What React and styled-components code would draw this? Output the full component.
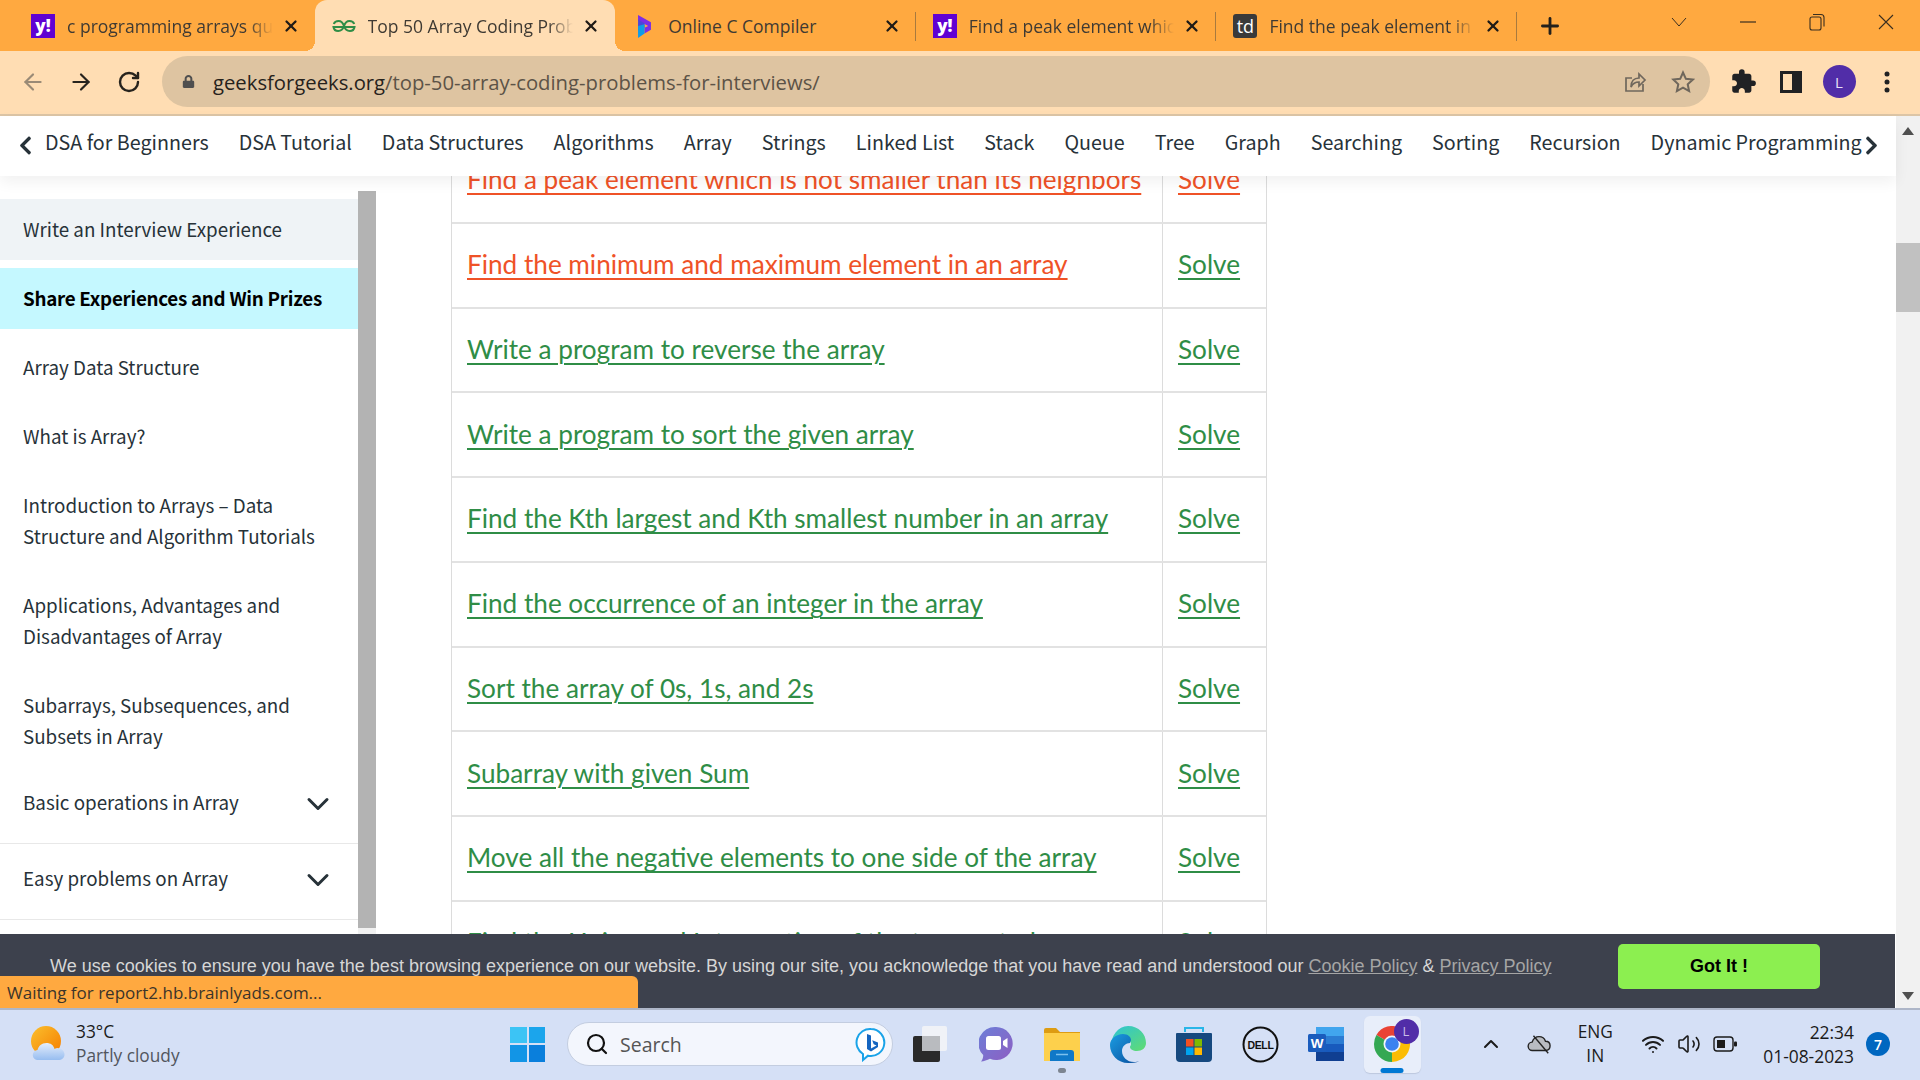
import React from 'react';
import styled, { createGlobalStyle } from 'styled-components';
import { ArrowLeft, ArrowRight, RotateCw, Plus, X, ChevronDown, ChevronUp, Search as SearchGlyph, Wifi, Volume2 } from 'lucide-react';
import { FaChevronLeft, FaChevronRight, FaLock } from 'react-icons/fa';
import { MdExtension } from 'react-icons/md';

const ui = '"Open Sans", "Noto Sans", sans-serif';
const site = '"Noto Sans CJK SC", "Noto Sans", sans-serif';

const GlobalStyle = createGlobalStyle`
  html, body { margin: 0; padding: 0; background: #fff; overflow: hidden; }
  * { box-sizing: border-box; }
`;

const Screen = styled.div`
  width: 1920px;
  height: 1080px;
  display: flex;
  flex-direction: column;
  overflow: hidden;
  font-family: ${ui};
`;

/* ---------- tab strip ---------- */
const TabStrip = styled.div`
  height: 51px;
  flex: none;
  display: flex;
  padding-left: 14px;
  background: #ffa940;
`;

const Tab = styled.div`
  position: relative;
  width: 300.6px;
  height: 51px;
  display: flex;
  align-items: center;
  padding: 0 15px 0 17px;
  border-radius: 12px 12px 0 0;
  background: ${p => (p.$active ? '#ffddb3' : 'transparent')};

  &::before {
    content: ${p => (p.$active ? '""' : 'none')};
    position: absolute;
    left: -10px;
    bottom: 0;
    width: 10px;
    height: 10px;
    background: radial-gradient(circle at 0 0, transparent 10px, #ffddb3 10px);
  }

  &::after {
    content: '';
    position: absolute;
    right: ${p => (p.$active ? '-10px' : '0')};
    bottom: ${p => (p.$active ? '0' : '10px')};
    top: ${p => (p.$active ? 'auto' : '12px')};
    width: ${p => (p.$active ? '10px' : p.$sep ? '1px' : '0')};
    height: ${p => (p.$active ? '10px' : 'auto')};
    background: ${p => (p.$active ? 'radial-gradient(circle at 100% 0, transparent 10px, #ffddb3 10px)' : '#a87a3e')};
  }
`;

const Favicon = styled.span`
  width: 24px;
  height: 24px;
  flex: none;
  display: flex;
  align-items: center;
  justify-content: center;
  border-radius: ${p => p.$radius || 0}px;
  background: ${p => p.$bg || 'transparent'};
  color: #fff;
  font-size: ${p => p.$size || 16}px;
  font-weight: ${p => p.$weight || 400};
`;

const TabTitle = styled.span`
  flex: 1;
  min-width: 0;
  margin: 0 9px 0 12px;
  overflow: hidden;
  white-space: nowrap;
  font-size: 17.5px;
  color: #3f3a33;
  -webkit-mask-image: ${p => (p.$fade ? 'linear-gradient(to right, #000 88%, transparent)' : 'none')};
  mask-image: ${p => (p.$fade ? 'linear-gradient(to right, #000 88%, transparent)' : 'none')};
`;

const NewTab = styled.span`
  margin-left: 20px;
  display: flex;
  align-items: center;
  color: #24211c;
`;

const WindowControls = styled.div`
  margin-left: auto;
  display: flex;
  height: 44px;
`;

const WindowButton = styled.span`
  width: 69px;
  display: flex;
  align-items: center;
  justify-content: center;
  color: #3a2f20;
`;

/* ---------- address toolbar ---------- */
const Toolbar = styled.div`
  height: 65px;
  flex: none;
  display: flex;
  align-items: center;
  padding: 0 0 2px 9px;
  background: #ffddb3;
  border-bottom: 2px solid #dcc5a6;
`;

const NavButton = styled.span`
  width: 48px;
  display: flex;
  justify-content: center;
  color: ${p => (p.$dim ? '#9a8a76' : '#27231d')};
`;

const AddressBar = styled.div`
  margin-left: 9px;
  width: 1548px;
  height: 51px;
  display: flex;
  align-items: center;
  padding: 0 15px 0 20px;
  border-radius: 26px;
  background: #dec4a1;
`;

const Url = styled.span`
  margin-left: 18px;
  font-size: 20.25px;
  color: #5c5347;
`;

const Host = styled.span`
  color: #26221c;
`;

const AddressActions = styled.div`
  margin-left: auto;
  display: flex;
  align-items: center;
  gap: 24px;
  color: #6f675c;
`;

const ToolIcon = styled.span`
  width: 48px;
  display: flex;
  justify-content: center;
  color: #202124;
`;

const Avatar = styled.span`
  width: 33px;
  height: 33px;
  border-radius: 50%;
  display: flex;
  align-items: center;
  justify-content: center;
  background: #512da8;
  color: #e8e0f6;
  font-size: 15px;
`;

const Tools = styled.div`
  display: flex;
  align-items: center;
  margin-left: 9px;
`;

/* ---------- page ---------- */
const Page = styled.div`
  position: relative;
  flex: 1;
  min-height: 0;
  display: flex;
  background: #fff;
`;

const PageColumn = styled.div`
  flex: 1;
  min-width: 0;
  display: flex;
  flex-direction: column;
`;

const Scrollbar = styled.div`
  width: 24px;
  flex: none;
  display: flex;
  flex-direction: column;
  align-items: center;
  padding: 11px 0 8px;
  background: #f1f1f1;
`;

const ScrollArrow = styled.span`
  width: 0;
  height: 0;
  border-left: 6px solid transparent;
  border-right: 6px solid transparent;
  border-${p => (p.$down ? 'top' : 'bottom')}: 8px solid #505050;
  margin-top: ${p => (p.$down ? 'auto' : '0')};
`;

const ScrollThumb = styled.span`
  width: 100%;
  height: 69px;
  margin-top: 108px;
  background: #c1c1c1;
`;

const TopicNav = styled.nav`
  position: relative;
  z-index: 2;
  height: 60px;
  flex: none;
  display: flex;
  align-items: center;
  gap: 30px;
  padding: 0 34px 9px 45px;
  background: #fff;
  box-shadow: 0 6px 14px rgba(0, 0, 0, 0.06);
  font-family: ${site};
  font-size: 19.7px;
  color: #273239;
  white-space: nowrap;
  overflow: hidden;
`;

const NavArrow = styled.span`
  position: absolute;
  top: 19px;
  ${p => (p.$right ? 'right: 14px;' : 'left: 15px;')}
  display: flex;
  color: #273239;
  font-size: 21px;
  z-index: 1;
`;

const Body = styled.div`
  flex: 1;
  min-height: 0;
  display: flex;
  overflow: hidden;
`;

const Sidebar = styled.aside`
  width: 377px;
  flex: none;
  display: flex;
  padding-top: 15px;
  font-family: ${site};
  font-size: 18.8px;
  color: #273239;
`;

const SideList = styled.div`
  width: 358px;
  flex: none;
  display: flex;
  flex-direction: column;
  gap: 8px;
  padding-top: 8px;
`;

const SideItem = styled.div`
  padding: 14px 23px 16px;
  line-height: 31px;
  color: ${p => (p.$strong ? '#000' : '#273239')};
  font-weight: ${p => (p.$strong ? 600 : 400)};
  letter-spacing: ${p => (p.$strong ? '-0.27px' : '0')};
  background: ${p => p.$bg || 'transparent'};
`;

const SideGroup = styled.div`
  height: 76.5px;
  flex: none;
  margin-top: -8px;
  display: flex;
  align-items: center;
  justify-content: space-between;
  padding: 0 22px 7px 23px;
  border-bottom: 1px solid #e8e8e8;
  color: #273239;

  svg {
    margin-top: 5px;
  }
`;

const SideRail = styled.div`
  width: 18px;
  flex: none;
  height: 743px;
  background: linear-gradient(to bottom, #b3b3b3 737px, #f1f1f1 737px);
`;

const Main = styled.main`
  flex: 1;
  min-width: 0;
  padding-left: 74px;
`;

const ProblemTable = styled.div`
  width: 816px;
  margin-top: -37px;
  border-left: 1px solid #dcdcdc;
  border-right: 1px solid #dcdcdc;
  font-family: Lato, "Open Sans", sans-serif;
  font-size: 26.15px;
`;

const ProblemRow = styled.div`
  height: 84.75px;
  display: grid;
  grid-template-columns: 711px 1fr;
  align-items: stretch;
  border-bottom: 2px solid #e2e2e2;
`;

const ProblemCell = styled.div`
  display: flex;
  align-items: center;
  padding: 0 0 2px 15px;
  border-right: ${p => (p.$first ? '1px solid #dcdcdc' : 'none')};
`;

const ProblemLink = styled.a`
  color: ${p => (p.$visited ? '#ef5227' : '#2f8d46')};
  text-decoration: underline;
  text-decoration-thickness: 2px;
  text-underline-offset: 4px;
  white-space: nowrap;
`;

const CookieBar = styled.div`
  position: absolute;
  left: 0;
  bottom: 0;
  z-index: 3;
  width: 1895px;
  height: 74px;
  display: flex;
  align-items: flex-start;
  padding: 10px 0 0 50px;
  background: #3d414d;
  font-family: "Liberation Sans", Arial, sans-serif;
  font-size: 18px;
  color: #d6d6d6;
`;

const CookieText = styled.p`
  margin: 0;
  width: 1568px;
  line-height: 45px;
  white-space: nowrap;
`;

const CookieLink = styled.a`
  color: #a5a5a5;
  text-decoration: underline;
`;

const GotIt = styled.button`
  width: 202px;
  height: 45px;
  border: none;
  border-radius: 5px;
  background: #8cef50;
  color: #000;
  font-family: "Liberation Sans", Arial, sans-serif;
  font-size: 18px;
  font-weight: 700;
`;

const StatusPill = styled.div`
  position: absolute;
  left: 0;
  bottom: 0;
  z-index: 4;
  width: 638px;
  height: 32px;
  display: flex;
  align-items: center;
  padding-left: 7px;
  border-radius: 0 6px 0 0;
  background: #ffa940;
  font-size: 17px;
  color: #3b342a;
`;

/* ---------- taskbar ---------- */
const Taskbar = styled.footer`
  height: 72px;
  flex: none;
  display: flex;
  align-items: center;
  padding-bottom: 2px;
  background: #d5e0f6;
  border-top: 2px solid #aeb6c8;
`;

const Weather = styled.div`
  width: 510px;
  flex: none;
  display: flex;
  align-items: center;
  gap: 10px;
  padding-left: 30px;
`;

const WeatherText = styled.div`
  display: flex;
  flex-direction: column;
  font-size: 17.3px;
  line-height: 24px;
  color: #1c1c1c;
`;

const WeatherNote = styled.span`
  color: #52565e;
`;

const StartButton = styled.span`
  width: 35px;
  height: 35px;
  flex: none;
  display: grid;
  grid-template-columns: 1fr 1fr;
  gap: 2px;
`;

const StartPane = styled.span`
  background: ${p => p.$bg};
`;

const SearchBox = styled.div`
  width: 326px;
  height: 44px;
  flex: none;
  margin: 0 4px 0 22px;
  display: flex;
  align-items: center;
  padding: 0 5px 0 17px;
  border-radius: 22px;
  background: #f3f6fd;
  border: 1px solid #c3cde0;
  color: #111;
`;

const SearchLabel = styled.span`
  margin-left: 11px;
  font-size: 19.5px;
  color: #555;
`;

const BingMark = styled.span`
  margin-left: auto;
  display: flex;
`;

const TaskSlot = styled.span`
  position: relative;
  width: ${p => (p.$active ? '57px' : '66px')};
  height: 57px;
  margin: ${p => (p.$active ? '0 4.5px' : '0')};
  flex: none;
  display: flex;
  align-items: center;
  justify-content: center;
  border-radius: 6px;
  background: ${p => (p.$active ? '#e8eefa' : 'transparent')};
  box-shadow: ${p => (p.$active ? '0 1px 1px #bdc8de' : 'none')};
`;

const RunDot = styled.span`
  position: absolute;
  left: 50%;
  bottom: 0;
  transform: translateX(-50%);
  height: 5px;
  width: ${p => (p.$active ? '23px' : '8px')};
  border-radius: 3px;
  background: ${p => (p.$active ? '#0078d4' : '#7d8591')};
`;

const AppBadge = styled.span`
  position: absolute;
  top: 3px;
  right: 2px;
  width: 25px;
  height: 25px;
  display: flex;
  align-items: center;
  justify-content: center;
  border-radius: 50%;
  background: #512da8;
  color: #c9bde8;
  font-size: 13px;
`;

const Tray = styled.div`
  margin-left: auto;
  display: flex;
  align-items: center;
  padding-right: 30px;
  color: #1b1b1b;
`;

const TrayIcon = styled.span`
  width: ${p => p.$w || 24}px;
  margin-left: ${p => p.$gap || 0}px;
  display: flex;
  justify-content: center;
`;

const Lang = styled.div`
  width: 36px;
  margin-left: ${p => p.$gap}px;
  text-align: center;
  font-size: 17.3px;
  line-height: 24px;
`;

const Clock = styled.div`
  margin-left: 26px;
  text-align: right;
  font-size: 17.4px;
  line-height: 24px;
`;

const NotifyBadge = styled.span`
  width: 24px;
  height: 24px;
  margin-left: 12px;
  display: flex;
  align-items: center;
  justify-content: center;
  border-radius: 50%;
  background: #0067c0;
  color: #fff;
  font-size: 14px;
  font-weight: 600;
`;

/* ---------- drawn icons ---------- */
const GfgIcon = () => (
  <svg width="24" height="14" viewBox="0 0 24 14" fill="none" stroke="#2f8d46" strokeWidth="2">
    <path d="M12 8h10.5c-.4 2.6-2.2 4-4.7 4-2.8 0-4.8-2-5.8-5-1-3-2.8-5-5.4-5C4.300 2 2.500 3 1.800 5" />
    <path d="M12 8H1.500c.4 2.600 2.200 4 4.700 4 2.800 0 4.800-2 5.800-5 1-3 2.800-5 5.400-5 2.300 0 4.100 1 4.800 3" />
  </svg>
);

const PerplexityIcon = () => (
  <svg width="15" height="24" viewBox="0 0 16 26">
    <path d="M1 1l14 8v8l-7 4v-6l4-2-11-6z" fill="#7c2ee6" />
    <path d="M1 6l7 4v5l-7 3z" fill="#4c46d8" />
    <path d="M1 13l7-2v10l-7 5z" fill="#0f9be8" />
  </svg>
);

const ThinChevron = () => (
  <svg width="16" height="10" viewBox="0 0 16 10" fill="none" stroke="currentColor" strokeWidth="1">
    <path d="M1 1l7 8 7-8" />
  </svg>
);

const MinimizeIcon = () => (
  <svg width="16" height="2" viewBox="0 0 16 2"><path d="M0 1h16" stroke="currentColor" strokeWidth="1.200" /></svg>
);

const RestoreIcon = () => (
  <svg width="16" height="18" viewBox="0 0 16 18" fill="none" stroke="currentColor" strokeWidth="1.100">
    <rect x="1" y="4" width="11" height="13" rx="2" />
    <path d="M4 1.500h8a3 3 0 0 1 3 3v9" />
  </svg>
);

const CloseThin = () => (
  <svg width="16" height="16" viewBox="0 0 16 16" stroke="currentColor" strokeWidth="1.100">
    <path d="M1 1l14 14M15 1L1 15" />
  </svg>
);

const ShareIcon = () => (
  <svg width="24" height="24" viewBox="0 0 24 24" fill="none" stroke="currentColor" strokeWidth="1.700">
    <path d="M20 14v7H3V8h6" />
    <path d="M8 17c0-6 3-9 8-9V4l6 6-6 6v-4c-3 0-6 1-8 5z" />
  </svg>
);

const StarIcon = () => (
  <svg width="24" height="24" viewBox="0 0 24 24" fill="none" stroke="currentColor" strokeWidth="2">
    <path d="M12 2.500l2.900 6.300 6.900.8-5.100 4.700 1.400 6.800-6.100-3.400-6.100 3.400 1.400-6.800L2.300 9.600l6.900-.8z" />
  </svg>
);

const SidePanelIcon = () => (
  <svg width="22" height="24" viewBox="0 0 22 24">
    <path d="M0 1h22v22H0z" fill="#202124" />
    <path d="M3 4h9v16H3z" fill="#ffddb3" />
  </svg>
);

const DotsIcon = () => (
  <svg width="6" height="24" viewBox="0 0 6 24" fill="#202124">
    <circle cx="3" cy="4" r="2.500" />
    <circle cx="3" cy="12" r="2.500" />
    <circle cx="3" cy="20" r="2.500" />
  </svg>
);

const WeatherIcon = () => (
  <svg width="36" height="36" viewBox="0 0 36 36">
    <defs>
      <linearGradient id="sun" x1="0" y1="0" x2="1" y2="1">
        <stop offset="0" stopColor="#fbc02d" />
        <stop offset="1" stopColor="#f57c00" />
      </linearGradient>
      <linearGradient id="cloud" x1="0" y1="0" x2="0" y2="1">
        <stop offset="0" stopColor="#e4edfb" />
        <stop offset="1" stopColor="#97bdf0" />
      </linearGradient>
    </defs>
    <circle cx="16" cy="15" r="15" fill="url(#sun)" />
    <path d="M8 34a5 5 0 0 1-.5-10c1-4 4-7 9-7 4 0 7 2 8 6 1-.6 2-1 3-1 4 0 7 3 7 6.500S32 34 28 34z" fill="url(#cloud)" />
  </svg>
);

const BingIcon = () => (
  <svg width="32" height="36" viewBox="0 0 32 36">
    <path d="M16 3a13.500 13.500 0 1 1-3 26.700L8 34v-6A13.500 13.500 0 0 1 16 3z" fill="#fff" stroke="#1aa3e8" strokeWidth="2" />
    <path d="M12 8l4 1.500v13l5.500-3-2.800-1.300-1.500-4L23 16.500v4.500l-7 4.500-4-2.500z" fill="#1565c0" />
  </svg>
);

const TaskViewIcon = () => (
  <svg width="34" height="36" viewBox="0 0 34 36">
    <rect x="0" y="10" width="27" height="26" rx="2" fill="#2a2a2a" />
    <rect x="9" y="0" width="25" height="25" rx="2" fill="#f0f2f7" />
    <rect x="9" y="10" width="18" height="15" fill="#b9bbbf" />
  </svg>
);

const TeamsIcon = () => (
  <svg width="34" height="36" viewBox="0 0 34 36">
    <defs>
      <linearGradient id="teams" x1="0" y1="0" x2="1" y2="1">
        <stop offset="0" stopColor="#6b7fd8" />
        <stop offset="1" stopColor="#8e5ec2" />
      </linearGradient>
    </defs>
    <path d="M17 1a16.500 16.500 0 1 1-6 31.800c-3 1.400-6 2.600-9 2.800 1.500-2 2.300-4 2.200-6.500A16.500 16.500 0 0 1 17 1z" fill="url(#teams)" />
    <rect x="7" y="10" width="15" height="14" rx="2.500" fill="#fff" />
    <path d="M24 15l4.500-3v10L24 19z" fill="#fff" />
  </svg>
);

const ExplorerIcon = () => (
  <svg width="36" height="34" viewBox="0 0 36 34">
    <path d="M0 3a2 2 0 0 1 2-2h10l4 4h20v5H0z" fill="#dd9c12" />
    <path d="M0 6h36v28H0z" fill="#fdd04c" />
    <path d="M6 34v-8a3 3 0 0 1 3-3h18a3 3 0 0 1 3 3v8z" fill="#0f78c8" />
    <path d="M12 27.500h12" stroke="#7cc0ee" strokeWidth="1.500" />
  </svg>
);

const EdgeIcon = () => (
  <svg width="36" height="37" viewBox="0 0 36 37">
    <defs>
      <linearGradient id="edgeA" x1="0" y1="0" x2="1" y2="1">
        <stop offset="0" stopColor="#2bc3d9" />
        <stop offset="1" stopColor="#62dc70" />
      </linearGradient>
      <linearGradient id="edgeB" x1="0" y1="0" x2="1" y2="1">
        <stop offset="0" stopColor="#1b9de2" />
        <stop offset="1" stopColor="#0a4f9e" />
      </linearGradient>
    </defs>
    <path d="M18 0c11 0 18 8 18 17 0 5-4 8-9 8-4 0-7-2-7-4 0-1 1-1.500 1-3 0-3-3-5-7-5-8 0-14 6-14 11C1 9 8 0 18 0z" fill="url(#edgeA)" />
    <path d="M0 19c0-6 6-11 13-11 5 0 8 3 8 6 0 1-1 2-1 3-4 0-8 3-8 8 0 6 5 11 12 11 2 0 4-.5 5-1-3 2-7 2-11 2C8 37 0 29 0 19z" fill="url(#edgeB)" />
  </svg>
);

const StoreIcon = () => (
  <svg width="36" height="37" viewBox="0 0 36 37">
    <path d="M9 6V2h18v4" fill="none" stroke="#29b6e8" strokeWidth="2" />
    <path d="M1 7h34a1 1 0 0 1 1 1v24a4 4 0 0 1-4 4H4a4 4 0 0 1-4-4V8a1 1 0 0 1 1-1z" fill="#16497f" />
    <rect x="10" y="13" width="7.500" height="7.500" fill="#f25022" />
    <rect x="18.500" y="13" width="7.500" height="7.500" fill="#7fba00" />
    <rect x="10" y="21.500" width="7.500" height="7.500" fill="#00a4ef" />
    <rect x="18.500" y="21.500" width="7.500" height="7.500" fill="#ffb900" />
  </svg>
);

const DellIcon = () => (
  <svg width="37" height="37" viewBox="0 0 37 37">
    <circle cx="18.500" cy="18.500" r="17" fill="none" stroke="#111" strokeWidth="2" />
    <text x="18.500" y="22.500" textAnchor="middle" fontFamily="Liberation Sans, sans-serif" fontSize="10.500" fontWeight="700" letterSpacing="-0.4" fill="#111">DELL</text>
  </svg>
);

const WordIcon = () => (
  <svg width="36" height="34" viewBox="0 0 36 34">
    <path d="M8 0h28v9H8z" fill="#41a5ee" />
    <path d="M8 9h28v8H8z" fill="#2b7cd3" />
    <path d="M8 17h28v8H8z" fill="#185abd" />
    <path d="M8 25h28v9H8z" fill="#103f91" />
    <rect x="0" y="7" width="18" height="18" rx="1.500" fill="#1a5cbd" />
    <text x="9" y="21" textAnchor="middle" fontFamily="Liberation Sans, sans-serif" fontSize="13.500" fontWeight="700" fill="#fff">W</text>
  </svg>
);

const ChromeIcon = () => (
  <svg width="36" height="36" viewBox="0 0 36 36">
    <g fill="none" strokeWidth="12">
      <circle cx="18" cy="18" r="12" stroke="#ea4335" pathLength="3" strokeDasharray="1 2" transform="rotate(-150 18 18)" />
      <circle cx="18" cy="18" r="12" stroke="#fbbc04" pathLength="3" strokeDasharray="1 2" transform="rotate(-30 18 18)" />
      <circle cx="18" cy="18" r="12" stroke="#34a853" pathLength="3" strokeDasharray="1 2" transform="rotate(90 18 18)" />
    </g>
    <circle cx="18" cy="18" r="8.500" fill="#f2f5fb" />
    <circle cx="18" cy="18" r="6.800" fill="#3b82f0" />
  </svg>
);

const CloudOffIcon = () => (
  <svg width="26" height="22" viewBox="0 0 26 22">
    <path d="M6 18a4.500 4.500 0 0 1-.5-9C7 5 10 3 13 3c3.500 0 6 2 7 5 3 0 5 2 5 5s-2 5-5 5z" fill="#b9bcc2" stroke="#222" strokeWidth="1.500" />
    <path d="M7 2l16 19" stroke="#222" strokeWidth="1.500" />
  </svg>
);

const BatteryIcon = () => (
  <svg width="24" height="18" viewBox="0 0 24 18">
    <rect x="1" y="2" width="19" height="14" rx="3" fill="none" stroke="#1b1b1b" strokeWidth="1.400" />
    <rect x="4" y="5" width="8" height="8" fill="#1b1b1b" />
    <rect x="21" y="6.500" width="3" height="5" rx="1" fill="#1b1b1b" />
  </svg>
);

/* ---------- data ---------- */
const tabs = [
  { title: 'c programming arrays questions', icon: <Favicon $bg="#6001d2" $size={17} $weight={800}>y!</Favicon>, fade: true },
  { title: 'Top 50 Array Coding Problems for', icon: <Favicon><GfgIcon /></Favicon>, active: true, fade: true },
  { title: 'Online C Compiler', icon: <Favicon><PerplexityIcon /></Favicon>, sep: true },
  { title: 'Find a peak element which is not', icon: <Favicon $bg="#6001d2" $size={17} $weight={800}>y!</Favicon>, fade: true, sep: true },
  { title: 'Find the peak element in an array', icon: <Favicon $bg="#3a3a3a" $radius={3} $size={18}>td</Favicon>, fade: true, sep: true },
];

const topics = ['DSA for Beginners', 'DSA Tutorial', 'Data Structures', 'Algorithms', 'Array', 'Strings', 'Linked List', 'Stack', 'Queue', 'Tree', 'Graph', 'Searching', 'Sorting', 'Recursion', 'Dynamic Programming'];

const problems = [
  { name: 'Find a peak element which is not smaller than its neighbors', visited: true, solved: true },
  { name: 'Find the minimum and maximum element in an array', visited: true },
  { name: 'Write a program to reverse the array' },
  { name: 'Write a program to sort the given array' },
  { name: 'Find the Kth largest and Kth smallest number in an array' },
  { name: 'Find the occurrence of an integer in the array' },
  { name: 'Sort the array of 0s, 1s, and 2s' },
  { name: 'Subarray with given Sum' },
  { name: 'Move all the negative elements to one side of the array' },
  { name: 'Find the Union and Intersection of the two sorted arrays' },
];

const sideLinks = [
  'Array Data Structure',
  'What is Array?',
  'Introduction to Arrays – Data Structure and Algorithm Tutorials',
  'Applications, Advantages and Disadvantages of Array',
  'Subarrays, Subsequences, and Subsets in Array',
];

const taskApps = [
  { id: 'view', icon: <TaskViewIcon /> },
  { id: 'teams', icon: <TeamsIcon /> },
  { id: 'files', icon: <ExplorerIcon />, running: true },
  { id: 'edge', icon: <EdgeIcon /> },
  { id: 'store', icon: <StoreIcon /> },
  { id: 'dell', icon: <DellIcon /> },
  { id: 'word', icon: <WordIcon /> },
  { id: 'chrome', icon: <ChromeIcon />, active: true },
];

export default function App() {
  return (
    <Screen>
      <GlobalStyle />
      <TabStrip>
        {tabs.map(t => (
          <Tab key={t.title} $active={t.active} $sep={t.sep}>
            {t.icon}
            <TabTitle $fade={t.fade}>{t.title}</TabTitle>
            <X size={18} strokeWidth={3} color="#1f1b16" />
          </Tab>
        ))}
        <NewTab><Plus size={26} strokeWidth={2.6} /></NewTab>
        <WindowControls>
          <WindowButton><ThinChevron /></WindowButton>
          <WindowButton><MinimizeIcon /></WindowButton>
          <WindowButton><RestoreIcon /></WindowButton>
          <WindowButton><CloseThin /></WindowButton>
        </WindowControls>
      </TabStrip>

      <Toolbar>
        <NavButton $dim><ArrowLeft size={26} strokeWidth={2} /></NavButton>
        <NavButton><ArrowRight size={26} strokeWidth={2} /></NavButton>
        <NavButton><RotateCw size={24} strokeWidth={2.4} /></NavButton>
        <AddressBar>
          <FaLock size={13} color="#4f4f4f" />
          <Url><Host>geeksforgeeks.org</Host>/top-50-array-coding-problems-for-interviews/</Url>
          <AddressActions>
            <ShareIcon />
            <StarIcon />
          </AddressActions>
        </AddressBar>
        <Tools>
          <ToolIcon><MdExtension size={27} /></ToolIcon>
          <ToolIcon><SidePanelIcon /></ToolIcon>
          <ToolIcon><Avatar>L</Avatar></ToolIcon>
          <ToolIcon><DotsIcon /></ToolIcon>
        </Tools>
      </Toolbar>

      <Page>
        <PageColumn>
          <TopicNav>
            <NavArrow><FaChevronLeft /></NavArrow>
            {topics.map(t => <span key={t}>{t}</span>)}
            <NavArrow $right><FaChevronRight /></NavArrow>
          </TopicNav>
          <Body>
            <Sidebar>
              <SideList>
                <SideItem $bg="#eff3f6">Write an Interview Experience</SideItem>
                <SideItem $bg="#c5f8ff" $strong>Share Experiences and Win Prizes</SideItem>
                {sideLinks.map(l => <SideItem key={l}>{l}</SideItem>)}
                <SideGroup>Basic operations in Array<ChevronDown size={36} strokeWidth={2} /></SideGroup>
                <SideGroup>Easy problems on Array<ChevronDown size={36} strokeWidth={2} /></SideGroup>
              </SideList>
              <SideRail />
            </Sidebar>
            <Main>
              <ProblemTable>
                {problems.map(p => (
                  <ProblemRow key={p.name}>
                    <ProblemCell $first><ProblemLink $visited={p.visited}>{p.name}</ProblemLink></ProblemCell>
                    <ProblemCell><ProblemLink $visited={p.solved}>Solve</ProblemLink></ProblemCell>
                  </ProblemRow>
                ))}
              </ProblemTable>
            </Main>
          </Body>
        </PageColumn>
        <Scrollbar>
          <ScrollArrow />
          <ScrollThumb />
          <ScrollArrow $down />
        </Scrollbar>
        <CookieBar>
          <CookieText>
            We use cookies to ensure you have the best browsing experience on our website. By using our site, you acknowledge that you have read and understood our <CookieLink>Cookie Policy</CookieLink> &amp; <CookieLink>Privacy Policy</CookieLink>
          </CookieText>
          <GotIt>Got It !</GotIt>
        </CookieBar>
        <StatusPill>Waiting for report2.hb.brainlyads.com...</StatusPill>
      </Page>

      <Taskbar>
        <Weather>
          <WeatherIcon />
          <WeatherText>
            <span>33°C</span>
            <WeatherNote>Partly cloudy</WeatherNote>
          </WeatherText>
        </Weather>
        <StartButton>
          <StartPane $bg="#3cc4f5" />
          <StartPane $bg="#1ba5ec" />
          <StartPane $bg="#1295e6" />
          <StartPane $bg="#0a7fdc" />
        </StartButton>
        <SearchBox>
          <SearchGlyph size={24} strokeWidth={2.2} />
          <SearchLabel>Search</SearchLabel>
          <BingMark><BingIcon /></BingMark>
        </SearchBox>
        {taskApps.map(a => (
          <TaskSlot key={a.id} $active={a.active}>
            {a.icon}
            {a.active && <AppBadge>L</AppBadge>}
            {(a.running || a.active) && <RunDot $active={a.active} />}
          </TaskSlot>
        ))}
        <Tray>
          <TrayIcon><ChevronUp size={24} strokeWidth={2} /></TrayIcon>
          <TrayIcon $gap={24}><CloudOffIcon /></TrayIcon>
          <Lang $gap={26}>ENG<br />IN</Lang>
          <TrayIcon $gap={28}><Wifi size={24} strokeWidth={2} /></TrayIcon>
          <TrayIcon $gap={12}><Volume2 size={24} strokeWidth={1.6} /></TrayIcon>
          <TrayIcon $gap={12}><BatteryIcon /></TrayIcon>
          <Clock>22:34<br />01-08-2023</Clock>
          <NotifyBadge>7</NotifyBadge>
        </Tray>
      </Taskbar>
    </Screen>
  );
}
